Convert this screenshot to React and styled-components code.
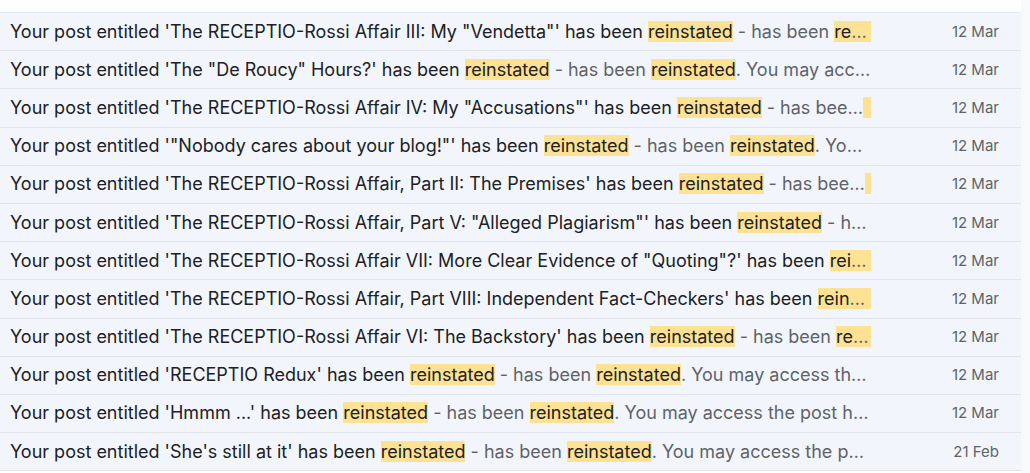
import React from "react";
import styled, { createGlobalStyle } from "styled-components";

const GlobalStyle = createGlobalStyle`
  html, body {
    margin: 0;
    padding: 0;
    background: #ffffff;
    font-family: Inter, Roboto, "Liberation Sans", sans-serif;
  }
`;

const titles = [
  `The RECEPTIO-Rossi Affair III: My "Vendetta"'`,
  `The "De Roucy" Hours?'`,
  `The RECEPTIO-Rossi Affair IV: My "Accusations"'`,
  `"Nobody cares about your blog!"'`,
  `The RECEPTIO-Rossi Affair, Part II: The Premises'`,
  `The RECEPTIO-Rossi Affair, Part V: "Alleged Plagiarism"'`,
  `The RECEPTIO-Rossi Affair VII: More Clear Evidence of "Quoting"?'`,
  `The RECEPTIO-Rossi Affair, Part VIII: Independent Fact-Checkers'`,
  `The RECEPTIO-Rossi Affair VI: The Backstory'`,
  `RECEPTIO Redux'`,
  `Hmmm ...'`,
  `She's still at it'`,
];

const dates = [
  "12 Mar", "12 Mar", "12 Mar", "12 Mar", "12 Mar", "12 Mar",
  "12 Mar", "12 Mar", "12 Mar", "12 Mar", "12 Mar", "21 Feb",
];

export default function App() {
  return (
    <Page>
      <GlobalStyle />
      <List>
        {titles.map((t, i) => (
          <Row key={i}>
            <Line>
              <Subject>
                Your post entitled '{t} has been <Mark>reinstated</Mark>
              </Subject>
              <Snippet>
                {" "}- has been <Mark>reinstated</Mark>. You may access the post here: https://www.blogger.com
              </Snippet>
            </Line>
            <DateCell>{dates[i]}</DateCell>
          </Row>
        ))}
      </List>
      <Gutter />
    </Page>
  );
}

const Page = styled.div`
  display: flex;
  padding-top: 12px;
  height: 461px;
  overflow: hidden;
`;

const List = styled.div`
  flex: 1;
  display: flex;
  flex-direction: column;
  border-top: 1px solid #e5e9ef;
`;

const Gutter = styled.div`
  width: 9px;
  background: #f8f9fa;
  margin-top: -12px;
`;

const Row = styled.div`
  display: flex;
  align-items: center;
  height: 37.2px;
  flex-shrink: 0;
  background: #f2f6fc;
  border-bottom: 1px solid #e1e5ea;
  padding-left: 10px;
  padding-right: 22px;
`;

const Line = styled.div`
  width: 861px;
  white-space: nowrap;
  overflow: hidden;
  text-overflow: ellipsis;
  font-size: 18px;
  line-height: 23px;
  margin-top: -1px;
  color: #5f6368;
`;

const Subject = styled.span`
  color: #202124;
`;

const Snippet = styled.span`
  color: #5f6368;
`;

const Mark = styled.span`
  background: #fde293;
  color: #202124;
`;

const DateCell = styled.div`
  margin-left: auto;
  margin-top: -1px;
  font-size: 15px;
  color: #5f6368;
  white-space: nowrap;
`;
